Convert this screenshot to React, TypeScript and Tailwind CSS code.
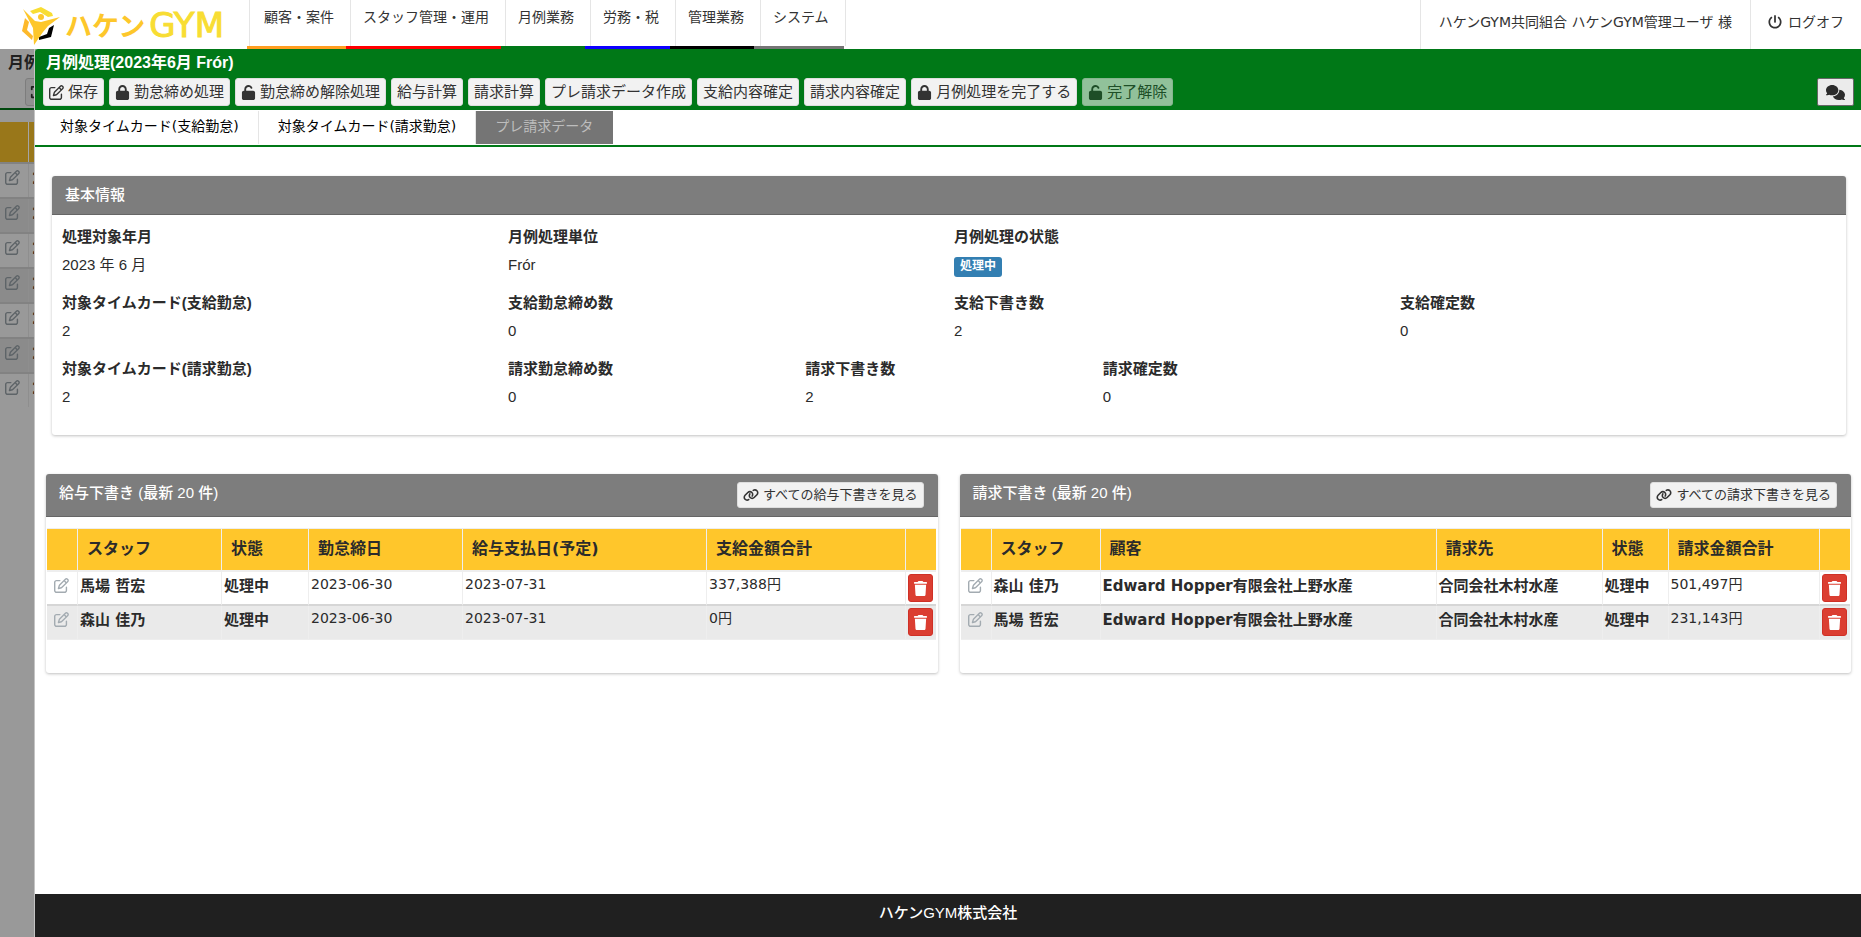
import {
  FaComments,
  FaExpand,
  FaLink,
  FaLock,
  FaPowerOff,
  FaRegPenToSquare,
  FaTrash,
  FaUnlock,
} from "react-icons/fa6";
import clsx from "clsx";
import type { ReactNode } from "react";

const sans = "font-['Liberation_Sans','Noto_Sans_CJK_JP',sans-serif]";

const navItems = ["顧客・案件", "スタッフ管理・運用", "月例業務", "労務・税", "管理業務", "システム"];

const navColors = [
  "w-[99px] bg-[#ff9e20]",
  "w-[155px] bg-[#ff0000]",
  "w-[84px] bg-[#007817]",
  "w-[85px] bg-[#0d00ff]",
  "w-[84px] bg-black",
  "w-[90px] bg-[#757575]",
];

const tabs = ["対象タイムカード(支給勤怠)", "対象タイムカード(請求勤怠)", "プレ請求データ"];

const actions: { label: string; icon?: ReactNode; disabled?: boolean }[] = [
  { label: "保存", icon: <FaRegPenToSquare size={15} /> },
  { label: "勤怠締め処理", icon: <FaLock size={15} /> },
  { label: "勤怠締め解除処理", icon: <FaUnlock size={15} /> },
  { label: "給与計算" },
  { label: "請求計算" },
  { label: "プレ請求データ作成" },
  { label: "支給内容確定" },
  { label: "請求内容確定" },
  { label: "月例処理を完了する", icon: <FaLock size={15} /> },
  { label: "完了解除", icon: <FaUnlock size={15} />, disabled: true },
];

const info = [
  { label: "処理対象年月", value: "2023 年 6 月", span: "col-span-3" },
  { label: "月例処理単位", value: "Frór", span: "col-span-3" },
  { label: "月例処理の状態", value: "処理中", span: "col-span-6", badge: true },
  { label: "対象タイムカード(支給勤怠)", value: "2", span: "col-span-3" },
  { label: "支給勤怠締め数", value: "0", span: "col-span-3" },
  { label: "支給下書き数", value: "2", span: "col-span-3" },
  { label: "支給確定数", value: "0", span: "col-span-3" },
  { label: "対象タイムカード(請求勤怠)", value: "2", span: "col-span-3" },
  { label: "請求勤怠締め数", value: "0", span: "col-span-2" },
  { label: "請求下書き数", value: "2", span: "col-span-2" },
  { label: "請求確定数", value: "0", span: "col-span-2" },
];

type Column = { title: string; width: string; bold?: boolean };

const salaryColumns: Column[] = [
  { title: "スタッフ", width: "w-[144px]", bold: true },
  { title: "状態", width: "w-[87px]", bold: true },
  { title: "勤怠締日", width: "w-[154px]" },
  { title: "給与支払日(予定)", width: "w-[244px]" },
  { title: "支給金額合計", width: "w-[199px]" },
];

const salaryRows = [
  ["馬場 哲宏", "処理中", "2023-06-30", "2023-07-31", "337,388円"],
  ["森山 佳乃", "処理中", "2023-06-30", "2023-07-31", "0円"],
];

const billingColumns: Column[] = [
  { title: "スタッフ", width: "w-[109px]", bold: true },
  { title: "顧客", width: "w-[336px]", bold: true },
  { title: "請求先", width: "w-[166px]", bold: true },
  { title: "状態", width: "w-[66px]", bold: true },
  { title: "請求金額合計", width: "w-[151px]" },
];

const billingRows = [
  ["森山 佳乃", "Edward Hopper有限会社上野水産", "合同会社木村水産", "処理中", "501,497円"],
  ["馬場 哲宏", "Edward Hopper有限会社上野水産", "合同会社木村水産", "処理中", "231,143円"],
];

const Logo = () => (
  <a href="#" className="flex w-[247px] shrink-0 items-center pl-[21px]">
    <svg viewBox="0 0 40 40" className="h-10 w-10 shrink-0">
      <path d="M9 6 L20 2 L31 8 L32 11 L27 12 L19 7 L12 9 Z" fill="#f8dd33" />
      <path d="M4 13 L1 26 L11 35 L12 31 L6 25 L8 17 Z" fill="#fdb92b" />
      <path d="M33 20 L30 32 L18 35 L18 32 L26 29 L28 23 Z" fill="#000" />
      <circle cx="20" cy="12" r="3" fill="#fdc72b" />
      <path d="M2 4 L14 16 L20 17 L39 12 L27 21 L22 27 L13 40 L12 23 Z" fill="#fdc72b" />
    </svg>
    <span className="ml-1 flex items-center gap-1 leading-10">
      <span className="font-['Noto_Sans_CJK_JP',sans-serif] text-[27px] font-bold text-[#fdc72b]">ハケン</span>
      <span className="font-['DejaVu_Sans',sans-serif] text-[34px] text-[#f8dd33] [-webkit-text-stroke:1px_#f8dd33]">
        GYM
      </span>
    </span>
  </a>
);

const Header = () => (
  <header className="flex h-[49px] shrink-0 bg-white text-sm text-[#333]">
    <Logo />
    <nav className="flex flex-col">
      <div className="flex flex-1 pl-[2px]">
        {navItems.map((item) => (
          <a
            key={item}
            href="#"
            className="border-l border-[#e5e5e5] pt-[7px] pr-4 pl-3 leading-5 whitespace-nowrap first:pl-[14px] last:border-r"
          >
            {item}
          </a>
        ))}
      </div>
      <div className="flex h-[3px]">
        {navColors.map((color) => (
          <span key={color} className={color} />
        ))}
      </div>
    </nav>
    <div className="ml-auto flex whitespace-nowrap">
      <span className="flex items-center border-l border-[#e5e5e5] px-[18px] pb-[6px]">
        ハケンGYM共同組合 ハケンGYM管理ユーザ 様
      </span>
      <a href="#" className="flex items-center gap-[6px] border-l border-[#e5e5e5] px-[17px] pb-[6px]">
        <FaPowerOff size={14} />
        ログオフ
      </a>
    </div>
  </header>
);

// the list page that stays visible, dimmed, beside the open panel
const BackPage = () => (
  <aside className="w-[35px] shrink-0 overflow-hidden border-r border-[#c4c4c4] bg-[#999] text-[#1f1f1f]">
    <div className="w-[48px]">
      <div className={clsx(sans, "h-[29px] pl-2 text-base leading-[28px] font-bold")}>月例</div>
      <div className="border-b-2 border-[#00480e] pb-[2px] pl-[25px]">
        <div className="flex h-7 items-center rounded-l-[3px] border border-[#7d7d7d] bg-[#919191] pl-1">
          <FaExpand size={14} className="shrink-0" />
        </div>
      </div>
      <div className="mt-3 flex h-10 bg-[#99771a]">
        <span className="w-[29px] border-r border-[#a5a5a5]" />
      </div>
      {[1, 2, 3, 4, 5, 6, 7].map((n) => (
        <div key={n} className="flex h-[35px] border-t-2 border-[#828282] odd:bg-[#8b8b8b]">
          <span className="w-[29px] border-r border-[#8e8e8e] pt-[6px] pl-[5px] text-[#5e6468]">
            <FaRegPenToSquare size={15} />
          </span>
          <b className="pt-1 pl-[3px] text-[15px]">2</b>
        </div>
      ))}
    </div>
  </aside>
);

const Toolbar = () => (
  <div className="flex gap-[5px] pr-[7px] pb-1 pl-2">
    {actions.map(({ label, icon, disabled }) => (
      <button
        key={label}
        disabled={disabled}
        className="flex h-7 items-center gap-1 rounded-[3px] border border-[#dedede] bg-[#f2f2f2] px-[5px] text-[15px] whitespace-nowrap text-[#333] disabled:opacity-60"
      >
        {icon}
        {label}
      </button>
    ))}
    <button
      aria-label="コメント"
      className="ml-auto flex h-7 w-[37px] items-center justify-center rounded-[2px] border border-[#666] bg-[#ebebeb] text-[#2b2b2b]"
    >
      <FaComments size={19} />
    </button>
  </div>
);

const cardHead = "flex rounded-t-[3px] border-b border-[#666] bg-[#7d7d7d] text-[15px] font-medium text-white";

const BasicInfo = () => (
  <section className={clsx(sans, "mr-[15px] ml-[17px] rounded-[3px] bg-white shadow-[0_1px_3px_rgba(0,0,0,0.25)]")}>
    <h2 className={clsx(cardHead, "h-[39px] items-center pl-[13px]")}>基本情報</h2>
    <dl className="grid grid-cols-12 px-[5px] py-[11px] text-[15px] leading-[22px] text-[#2b2b2b]">
      {info.map(({ label, value, span, badge }) => (
        <div key={label} className={clsx(span, "h-[66px] pl-[5px]")}>
          <dt className="font-bold">{label}</dt>
          <dd className="mt-[6px]">
            {badge ? (
              <span className="mt-[9px] block h-5 w-fit rounded-[3px] bg-[#337fb2] px-[6px] text-xs leading-[18px] font-bold text-white">
                {value}
              </span>
            ) : (
              value
            )}
          </dd>
        </div>
      ))}
    </dl>
  </section>
);

type DraftProps = { title: string; link: string; columns: Column[]; rows: string[][] };

const DraftCard = ({ title, link, columns, rows }: DraftProps) => (
  <section className="min-w-0 flex-1 rounded-[3px] bg-white pb-[33px] shadow-[0_1px_3px_rgba(0,0,0,0.25)]">
    <div className={clsx(cardHead, "h-[43px] items-start justify-between pt-2 pr-[14px] pl-[13px]")}>
      <h2 className={clsx(sans, "leading-[22px]")}>{title}</h2>
      <button className="flex h-[26px] items-center gap-1 rounded-[3px] border border-[#dedede] bg-[#f2f2f2] px-[5px] pb-px text-[13px] font-normal text-[#333]">
        <FaLink size={16} />
        {link}
      </button>
    </div>
    <div className="pt-[11px] pr-[2px] pl-px">
      <table className="w-full table-fixed border-separate border-spacing-0 text-left text-[#2b2b2b]">
        <thead>
          <tr className="h-[44px] bg-[#ffc62b]">
            <th className="w-[31px] border-t border-r border-b-2 border-[#eee]" />
            {columns.map(({ title, width }) => (
              <th
                key={title}
                className={clsx(width, "border-t border-r border-b-2 border-[#eee] pb-px pl-[9px] text-base font-bold")}
              >
                {title}
              </th>
            ))}
            <th className="w-[30px] border-t border-b-2 border-[#eee]" />
          </tr>
        </thead>
        <tbody>
          {rows.map((row) => (
            <tr key={row[0]} className="group h-[34px] align-top even:bg-[#eaeaea]">
              <td className="border-r border-b border-[#eee] pt-[6px] pl-[7px] text-[#a3abb1] group-first:border-b-2 group-first:border-b-[#d6d6d6]">
                <FaRegPenToSquare size={15} />
              </td>
              {row.map((cell, i) => (
                <td
                  key={i}
                  className={clsx(
                    "border-r border-b border-[#eee] pl-[2px] whitespace-nowrap group-first:border-b-2 group-first:border-b-[#d6d6d6]",
                    columns[i].bold ? "pt-[3px] text-[15px] leading-[22px] font-bold" : "pt-[2px] text-sm leading-5"
                  )}
                >
                  {cell}
                </td>
              ))}
              <td className="border-b border-[#eee] pt-[2px] pl-[2px] group-first:border-b-2 group-first:border-b-[#d6d6d6]">
                <button
                  aria-label="削除"
                  className="flex h-7 w-[25px] items-center justify-center rounded-[3px] border border-[#cf3026] bg-[#db3e31] text-white"
                >
                  <FaTrash size={15} />
                </button>
              </td>
            </tr>
          ))}
        </tbody>
      </table>
    </div>
  </section>
);

export default function App() {
  return (
    <div className="flex min-h-screen flex-col bg-white font-['DejaVu_Sans','Noto_Sans_CJK_JP',sans-serif]">
      <Header />
      <div className="flex flex-1 bg-[#999]">
        <BackPage />
        <main className="flex min-w-0 flex-1 flex-col rounded-tl-[3px] bg-white">
          <div className="rounded-tl-[3px] bg-[#007817]">
            <h1 className={clsx(sans, "h-[29px] pl-[11px] text-base leading-[28px] font-bold text-white")}>
              月例処理(2023年6月 Frór)
            </h1>
            <Toolbar />
          </div>
          <div className="flex border-b-2 border-[#007817] py-px pl-[6px] text-sm">
            {tabs.map((tab, i) => (
              <button
                key={tab}
                className={clsx(
                  "h-[33px] border-r px-[19px] pb-1 whitespace-nowrap",
                  i === 2 ? "border-[#757575] bg-[#757575] text-[#bdbdbd]" : "border-[#e5e5e5] text-black"
                )}
              >
                {tab}
              </button>
            ))}
          </div>
          <div className="flex flex-1 flex-col gap-[39px] pt-[29px] pb-8">
            <BasicInfo />
            <div className="flex items-start gap-[22px] pr-[10px] pl-[11px]">
              <DraftCard title="給与下書き (最新 20 件)" link="すべての給与下書きを見る" columns={salaryColumns} rows={salaryRows} />
              <DraftCard title="請求下書き (最新 20 件)" link="すべての請求下書きを見る" columns={billingColumns} rows={billingRows} />
            </div>
          </div>
          <footer className={clsx(sans, "h-[43px] bg-[#202020] text-center text-[15px] leading-[38px] font-medium text-white")}>
            ハケンGYM株式会社
          </footer>
        </main>
      </div>
    </div>
  );
}
